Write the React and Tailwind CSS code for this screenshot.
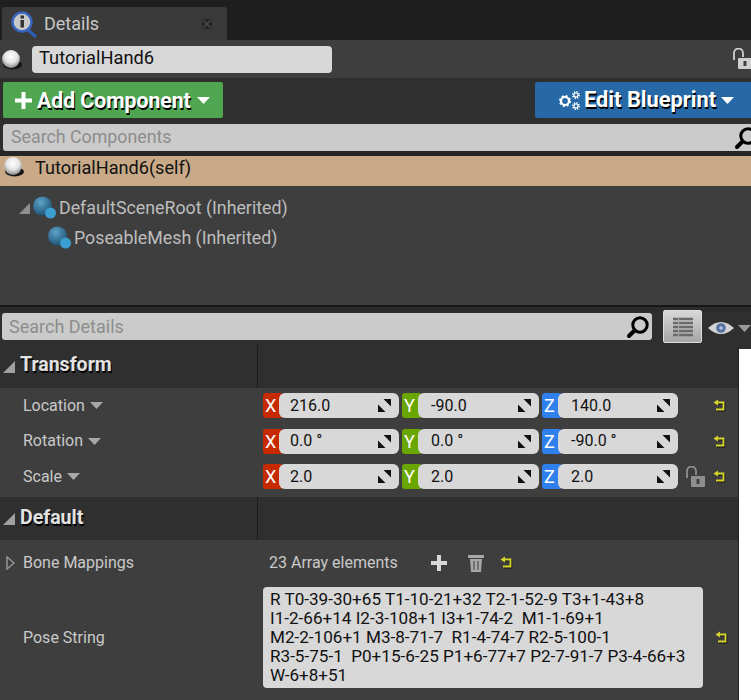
import { useId } from 'react';

const shadow = '[text-shadow:1px_2px_0_#000]';

function Ball({ size = 21 }) {
  const id = useId();
  return (
    <svg width={size} height={size} viewBox="0 0 20 20" className="shrink-0">
      <defs>
        <radialGradient id={id} cx="0.5" cy="0.35" r="0.65">
          <stop offset="0" stopColor="#ffffff" />
          <stop offset="0.55" stopColor="#e4e4e4" />
          <stop offset="1" stopColor="#8a8a8a" />
        </radialGradient>
      </defs>
      <ellipse cx="11" cy="15" rx="9" ry="4.5" fill="#151515" />
      <circle cx="9.5" cy="9.5" r="8.5" fill={`url(#${id})`} />
    </svg>
  );
}

function Sphere({ offset = '' }) {
  const id = useId();
  return (
    <svg width="25" height="24" viewBox="0 0 25 24" className={`shrink-0 ${offset}`}>
      <defs>
        <radialGradient id={id} cx="0.4" cy="0.3" r="0.7">
          <stop offset="0" stopColor="#5fa3c9" />
          <stop offset="1" stopColor="#1d5577" />
        </radialGradient>
      </defs>
      <circle cx="10.5" cy="10" r="9.5" fill={`url(#${id})`} />
      <circle cx="18.5" cy="17" r="5.5" fill="#3a9fd0" />
    </svg>
  );
}

function Caret({ className = '' }) {
  return (
    <svg width="13" height="7" viewBox="0 0 13 7" className={`shrink-0 ${className}`}>
      <path d="M0 0 H13 L6.5 7 Z" fill="currentColor" />
    </svg>
  );
}

function Gear({ cx, cy, r }) {
  const teeth = 2 * Math.PI * (r + 1) / 16;
  return (
    <g fill="none" stroke="#fff">
      <circle cx={cx} cy={cy} r={r} strokeWidth={r * 0.55} />
      <circle cx={cx} cy={cy} r={r + 1} strokeWidth="2" strokeDasharray={`${teeth} ${teeth}`} />
    </g>
  );
}

function Revert() {
  return (
    <svg width="13" height="13" viewBox="0 0 13 13" className="shrink-0">
      <path d="M4 3.5 H10.5 V10.5 H3" fill="none" stroke="#111" strokeWidth="1.8" transform="translate(0.8 1)" />
      <path d="M5 0.5 L0.5 3.5 L5 6.5 Z" fill="#d5d52c" />
      <path d="M4 3.5 H10.5 V10.5 H3" fill="none" stroke="#d5d52c" strokeWidth="1.8" />
    </svg>
  );
}

function Expand() {
  return (
    <svg width="13" height="13" viewBox="0 0 13 13" className="shrink-0">
      <path d="M0 13 V5.5 L7.5 13 Z" fill="#111" />
      <path d="M13 0 V7.5 L5.5 0 Z" fill="#111" />
    </svg>
  );
}

function Lock({ color = '#cfcfcf' }) {
  return (
    <svg width="21" height="22" viewBox="0 0 21 22" className="shrink-0">
      <path d="M2 12 V5 a4.5 4.5 0 0 1 9 0 V9" fill="none" stroke={color} strokeWidth="1.8" />
      <rect x="6" y="10" width="14" height="11" rx="1" fill={color} />
      <rect x="11.5" y="13" width="3" height="5" fill="#3e3e3e" />
    </svg>
  );
}

function Search() {
  return (
    <svg width="24" height="24" viewBox="0 0 24 24" className="shrink-0">
      <circle cx="14" cy="10" r="7.2" fill="none" stroke="#000" strokeWidth="3" />
      <path d="M8.5 15.5 L3 21" stroke="#000" strokeWidth="4" strokeLinecap="round" />
    </svg>
  );
}

function AxisField({ axis, value, color, width, inputClass }) {
  return (
    <div className={`flex h-[25px] shrink-0 ${width}`}>
      <div className={`w-[20px] shrink-0 rounded-[3px] ${color} pl-[2px] text-[18px] leading-[25px] text-white`}>{axis}</div>
      <div className={`-ml-[4px] flex flex-1 items-center justify-between rounded-[6px] bg-[#d8d8d8] pr-[8px] text-[16px] text-[#111] ${inputClass}`}>
        <span className="whitespace-pre">{value}</span>
        <Expand />
      </div>
    </div>
  );
}

function VectorRow({ label, values, lock }) {
  return (
    <div className="flex h-[35.5px] items-center">
      <div className="flex w-[257px] items-center gap-[5px] pl-[23px] text-[16px] text-[#c9c9c9]">
        {label}
        <Caret className="text-[#a8a8a8]" />
      </div>
      <div className="flex items-center pl-[6px]">
        <AxisField axis="X" value={values[0]} color="bg-[#c82a00]" width="w-[139px]" inputClass="mr-[3px] pl-[11px]" />
        <AxisField axis="Y" value={values[1]} color="bg-[#6aa600]" width="w-[140px]" inputClass="mr-[3px] pl-[13px]" />
        <AxisField axis="Z" value={values[2]} color="bg-[#2f80ed]" width="w-[136px]" inputClass="pl-[13px]" />
      </div>
      <div className="flex w-[48px] items-center justify-end gap-[7px]">
        {lock && <Lock color="#8f8f8f" />}
        <Revert />
      </div>
    </div>
  );
}

function SectionHeader({ title, lift }) {
  return (
    <div className="flex h-[43px] items-center bg-[#2f2f2f]">
      <div className="flex h-full w-[258px] items-center gap-[5px] border-r border-[#1c1c1c] pl-[3px]">
        <svg width="12" height="12" viewBox="0 0 12 12"><path d="M0 12 H12 V0 Z" fill="#a0a0a0" /></svg>
        <span className={`${lift} text-[19.5px] font-bold text-[#e2e2e2] ${shadow}`}>{title}</span>
      </div>
    </div>
  );
}

export default function App() {
  return (
    <div className="flex h-[700px] w-[751px] flex-col overflow-hidden bg-[#1f1f1f] font-['Roboto',sans-serif]">
      {/* tab strip */}
      <div className="flex h-[40px] shrink-0 items-end pl-[2px]">
        <div className="flex h-[33px] w-[225px] items-center rounded-t-[3px] bg-[#3a3a3a] pl-[9px] pr-[15px]">
          <svg width="26" height="28" viewBox="0 0 26 28" className="shrink-0">
            <path d="M17 20 L25 27" stroke="#2c5fb8" strokeWidth="3" />
            <circle cx="11" cy="12" r="9.5" fill="#c9c9c9" stroke="#3a66c0" strokeWidth="2.5" />
            <rect x="9.5" y="5.5" width="3.5" height="3" fill="#333" />
            <rect x="9.5" y="10" width="3.5" height="7.5" fill="#333" />
          </svg>
          <span className="ml-[7px] flex-1 text-[18px] text-[#c8c8c8]">Details</span>
          <svg width="10" height="10" viewBox="0 0 10 10"><rect width="10" height="10" fill="#262626" /><path d="M1 1 L9 9 M9 1 L1 9" stroke="#4c4c4c" strokeWidth="1.3" /></svg>
        </div>
      </div>

      {/* actor name */}
      <div className="flex h-[38px] shrink-0 items-center justify-between bg-[#3e3e3e] pl-[1px]">
        <div className="flex items-center">
          <Ball />
          <div className="ml-[10px] flex h-[27px] w-[300px] items-center rounded-[4px] bg-[#d8d8d8] pb-[2px] pl-[7px] text-[18.3px] text-[#111]">TutorialHand6</div>
        </div>
        <div className="-mr-[2px]"><Lock /></div>
      </div>

      {/* component buttons and search */}
      <div className="flex shrink-0 flex-col bg-[#2f2f2f] pt-[4px]">
        <div className="flex h-[36px] justify-between pl-[3px]">
          <div className={`flex w-[220px] items-center rounded-[2px] bg-[#50a650] pl-[12px] text-[21.2px] font-bold text-white ${shadow}`}>
            <svg width="17" height="17" viewBox="0 0 17 17" className="shrink-0"><path d="M6.5 0 H10.5 V6.5 H17 V10.5 H10.5 V17 H6.5 V10.5 H0 V6.5 H6.5 Z" fill="#fff" /></svg>
            <span className="ml-[5px] mt-[1px]">Add Component</span>
            <Caret className="ml-[6px] text-white" />
          </div>
          <div className={`flex w-[216px] items-center rounded-l-[2px] bg-[#2669a6] pl-[22px] text-[21.8px] font-bold text-white ${shadow}`}>
            <svg width="24" height="21" viewBox="0 0 24 21" className="shrink-0">
              <Gear cx={8} cy={11} r={4} />
              <Gear cx={19} cy={5} r={2} />
              <Gear cx={19} cy={16} r={2} />
            </svg>
            <span className="ml-[3px] mt-[1px]">Edit Blueprint</span>
            <Caret className="ml-[5px] text-white" />
          </div>
        </div>
        <div className="mt-[6px] ml-[3px] flex h-[27px] items-center justify-between rounded-l-[3px] bg-[#cbcbcb] pl-[8px] text-[17.8px] text-[#8d8d8d]">
          Search Components
          <div className="-mr-[7px]"><Search /></div>
        </div>
      </div>

      {/* component tree */}
      <div className="h-[5px] shrink-0 bg-[#252525]" />
      <div className="flex h-[30px] shrink-0 items-start bg-[#c8aa88] pl-[3px] text-[18.1px] leading-[24px] text-[#111]">
        <Ball />
        <span className="ml-[11px]">TutorialHand6(self)</span>
      </div>
      <div className="h-[119px] shrink-0 bg-[#3e3e3e] pt-[7px] text-[17.8px] text-[#bdbdbd]">
        <div className="flex h-[30px] items-center pl-[19px]">
          <svg width="11" height="11" viewBox="0 0 11 11"><path d="M0 11 H11 V0 Z" fill="#8f8f8f" /></svg>
          <Sphere offset="ml-[2px]" />
          <span className="ml-[2px]">DefaultSceneRoot (Inherited)</span>
        </div>
        <div className="flex h-[30px] items-center pl-[47px]">
          <Sphere />
          <span className="ml-[2px]">PoseableMesh (Inherited)</span>
        </div>
      </div>
      <div className="h-[7px] shrink-0 border-t-[2px] border-[#171717] bg-[#2c2c2c]" />

      {/* details search */}
      <div className="flex h-[33px] shrink-0 items-start bg-[#2f2f2f] pl-[2px] pt-[1px]">
        <div className="flex h-[27px] w-[651px] items-center justify-between rounded-[3px] bg-[#cbcbcb] pl-[7px] pr-[2px] text-[18px] text-[#8d8d8d]">
          Search Details
          <Search />
        </div>
        <div className="ml-[11px] -mt-[3px] flex h-[33px] w-[39px] items-center justify-center rounded-[2px] border border-[#dedede] bg-[linear-gradient(#d8d8d8,#a6a6a6)]">
          <svg width="20" height="20" viewBox="0 0 20 20">
            <path d="M0 2 H20 M0 6 H20 M0 10 H20 M0 14 H20 M0 18 H20" stroke="#6a6a6a" strokeWidth="2.4" />
            <path d="M5.5 0 V20" stroke="#a8a8a8" strokeWidth="1" />
          </svg>
        </div>
        <svg width="28" height="14" viewBox="0 0 28 14" className="ml-[6px] mt-[8px] shrink-0">
          <path d="M0 7 Q13 -5 26 7 Q13 19 0 7 Z" fill="#d4d4d4" />
          <circle cx="13" cy="7" r="4.8" fill="#55719f" />
          <circle cx="13" cy="7" r="1.8" fill="#b5c2d8" />
        </svg>
        <Caret className="ml-[2px] mt-[12px] text-[#9a9a9a]" />
      </div>

      {/* property grid */}
      <div className="flex min-h-0 flex-1 bg-[#2f2f2f]">
        <div className="w-[738px] shrink-0">
          <SectionHeader title="Transform" lift="-mt-[3px]" />
          <div className="h-[109px] bg-[#3e3e3e]">
            <VectorRow label="Location" values={['216.0', '-90.0', '140.0']} />
            <VectorRow label="Rotation" values={['0.0 °', '0.0 °', '-90.0 °']} />
            <VectorRow label="Scale" values={['2.0', '2.0', '2.0']} lock />
          </div>
          <SectionHeader title="Default" lift="-mt-[1px]" />
          <div className="flex h-[43px] items-center bg-[#3e3e3e] pt-[2px]">
            <div className="flex w-[257px] items-center pl-[6px] text-[16px] text-[#c9c9c9]">
              <svg width="9" height="14" viewBox="0 0 9 14" className="shrink-0"><path d="M1 1 L8 7 L1 13 Z" fill="none" stroke="#9a9a9a" strokeWidth="1.4" /></svg>
              <span className="ml-[8px]">Bone Mappings</span>
            </div>
            <span className="ml-[12px] w-[162px] text-[16px] text-[#c9c9c9]">23 Array elements</span>
            <svg width="16" height="16" viewBox="0 0 16 16" className="shrink-0"><path d="M6 0 H10 V6 H16 V10 H10 V16 H6 V10 H0 V6 H6 Z" fill="#d8d8d8" /></svg>
            <svg width="16" height="18" viewBox="0 0 16 18" className="ml-[21px] shrink-0">
              <rect x="0" y="1" width="16" height="3" fill="#a8a8a8" />
              <path d="M2 5 H14 L13 18 H3 Z" fill="#a8a8a8" />
              <path d="M6 7 V16 M10 7 V16" stroke="#5c5c5c" strokeWidth="1.4" />
            </svg>
            <div className="ml-[16px]"><Revert /></div>
          </div>
          <div className="flex h-[117px] items-start bg-[#3e3e3e] pt-[4px]">
            <div className="flex h-[101px] w-[257px] items-center pl-[23px] text-[16px] text-[#c9c9c9]">Pose String</div>
            <div className="ml-[6px] h-[101px] w-[440px] whitespace-pre rounded-[4px] bg-[#d8d8d8] px-[7px] pt-[3px] text-[17.1px] leading-[19px] text-[#111]">
              {'R T0-39-30+65 T1-10-21+32 T2-1-52-9 T3+1-43+8\nI1-2-66+14 I2-3-108+1 I3+1-74-2  M1-1-69+1\nM2-2-106+1 M3-8-71-7  R1-4-74-7 R2-5-100-1\nR3-5-75-1  P0+15-6-25 P1+6-77+7 P2-7-91-7 P3-4-66+3\nW-6+8+51'}
            </div>
            <div className="ml-[12px] mt-[44px]"><Revert /></div>
          </div>
        </div>
        <div className="w-[1px] shrink-0 bg-[#262626]" />
        <div className="mt-[4px] flex-1 bg-white" />
      </div>
    </div>
  );
}
